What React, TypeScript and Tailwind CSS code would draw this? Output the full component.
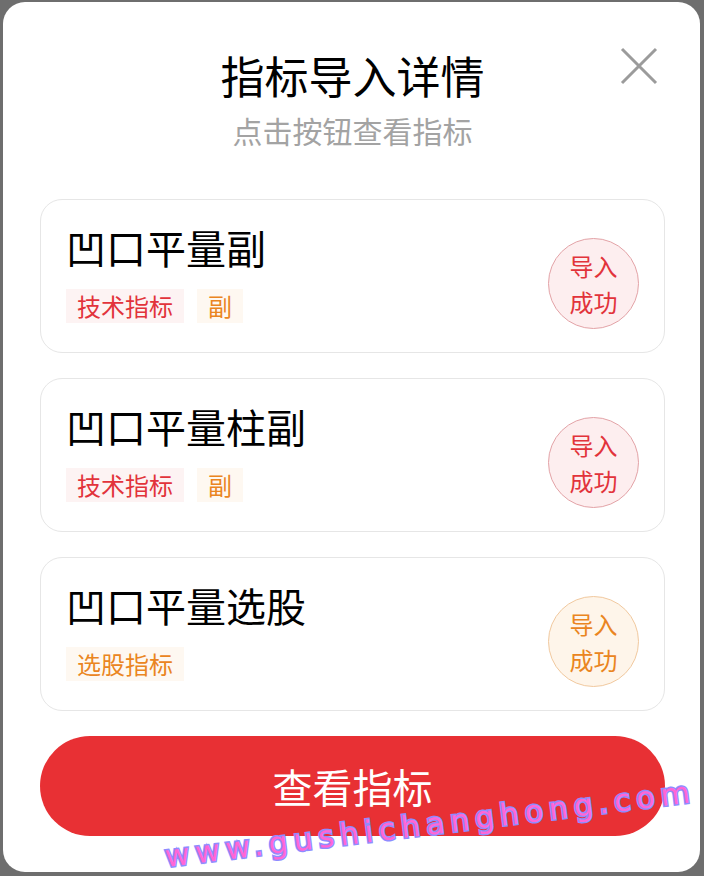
import React from "react";

const items = [
  { name: "凹口平量副", tags: [{ t: "技术指标", c: "red" }, { t: "副", c: "orange" }], tone: "red" },
  { name: "凹口平量柱副", tags: [{ t: "技术指标", c: "red" }, { t: "副", c: "orange" }], tone: "red" },
  { name: "凹口平量选股", tags: [{ t: "选股指标", c: "orange" }], tone: "orange" },
] as const;

const font = { fontFamily: '"Noto Sans CJK SC", "Noto Sans", sans-serif' };

export default function App() {
  return (
    <div className="w-[704px] h-[876px] bg-[#6e6e6e] pt-[2px] pl-[3px] overflow-hidden" style={font}>
      <div className="relative w-[697px] h-[870px] bg-white rounded-[22px] pt-[47px] pl-[37px] pr-[35px] flex flex-col">
        <button className="absolute right-[42px] top-[45px] w-[38px] h-[38px]">
          <svg viewBox="0 0 38 38" className="w-full h-full">
            <path d="M2 2 L36 36 M36 2 L2 36" stroke="#9b9b9b" strokeWidth="3" fill="none" />
          </svg>
        </button>
        <h1 className="text-center text-[44px] leading-[52px] text-black">指标导入详情</h1>
        <p className="text-center text-[30px] leading-[40px] text-[#a3a3a3] mt-[9px]">点击按钮查看指标</p>

        <div className="mt-[49px] flex flex-col gap-[25px]">
          {items.map((it, i) => (
            <div key={i} className="h-[154px] border border-[#e6e6e6] rounded-[22px] flex justify-between pl-[25px] pr-[25px]">
              <div className="pt-[23px]">
                <div className="text-[40px] leading-[48px] text-black">{it.name}</div>
                <div className="mt-[18px] flex gap-[13px]">
                  {it.tags.map((tg, j) => (
                    <span
                      key={j}
                      className={`h-[34px] px-[11px] text-[24px] leading-[34px] ${
                        tg.c === "red" ? "bg-[#fdf3f3] text-[#e2333b]" : "bg-[#fef8f1] text-[#ea8521]"
                      }`}
                    >
                      {tg.t}
                    </span>
                  ))}
                </div>
              </div>
              <div
                className={`mt-[38px] w-[91px] h-[91px] rounded-full border flex flex-col items-center justify-center text-[24px] leading-[36px] ${
                  it.tone === "red"
                    ? "border-[#e3a3a7] bg-[#fdeeef] text-[#e2333b]"
                    : "border-[#f1c99f] bg-[#fef5ea] text-[#ea8521]"
                }`}
              >
                <span>导入</span>
                <span>成功</span>
              </div>
            </div>
          ))}
        </div>

        <button className="mt-[25px] h-[100px] rounded-full bg-[#e83034] text-white text-[40px] leading-[100px] text-center">
          查看指标
        </button>

        <div
          className="absolute left-[162px] top-[838px] text-[30px] leading-[34px] tracking-[6px] text-[#ff66d6] -rotate-[7deg] origin-left pointer-events-none whitespace-nowrap"
          style={{ fontFamily: '"DejaVu Sans", sans-serif', WebkitTextStroke: "3px #8f8cff", paintOrder: "stroke fill" }}
        >
          www.gushichanghong.com
        </div>
      </div>
    </div>
  );
}
